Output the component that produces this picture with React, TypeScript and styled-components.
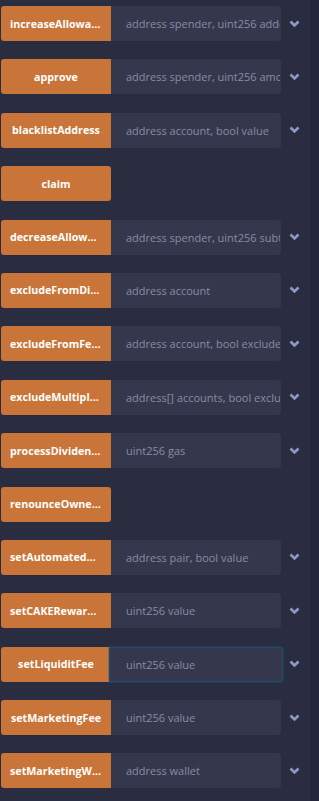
import React from "react";
import styled, { createGlobalStyle } from "styled-components";

const GlobalStyle = createGlobalStyle`
  html, body {
    margin: 0;
    padding: 0;
    background: #2a2c3f;
  }
  body {
    font-family: "Open Sans", "Liberation Sans", sans-serif;
  }
`;

const Page = styled.div`
  display: flex;
  width: 319px;
  height: 801px;
  overflow: hidden;
`;

const List = styled.div`
  flex: 1;
  display: flex;
  flex-direction: column;
  gap: 18.4px;
  padding: 6px 0 0 1px;
`;

const Strip = styled.div`
  width: 9px;
  background: #24263a;
`;

const Row = styled.div`
  display: flex;
  align-items: center;
  height: 35px;
`;

const FnButton = styled.button<{ $single?: boolean }>`
  width: 110px;
  height: 35px;
  flex: none;
  border: none;
  border-radius: ${(p) => (p.$single ? "3px" : "3px 0 0 3px")};
  background: #c97539;
  color: #fff;
  font-family: inherit;
  font-weight: 700;
  font-size: 10.7px;
  padding: 0 9px;
  white-space: nowrap;
  overflow: hidden;
  text-overflow: ellipsis;
`;

const ArgInput = styled.input<{ $focus?: boolean }>`
  height: 35px;
  box-sizing: border-box;
  border: 1px solid ${(p) => (p.$focus ? "#1e4f66" : "transparent")};
  margin-left: ${(p) => (p.$focus ? "-2px" : "0")};
  width: ${(p) => (p.$focus ? "174px" : "170px")};
  border-radius: 0 3px 3px 0;
  background: #35384c;
  color: #c8cbdc;
  font-family: inherit;
  font-size: 11px;
  padding: 0 0 0 ${(p) => (p.$focus ? "16px" : "14px")};
  outline: none;
  box-shadow: ${(p) => (p.$focus ? "0 0 0 1px rgba(30, 90, 120, 0.35)" : "none")};
  &::placeholder {
    color: #868ca5;
  }
`;

const Toggle = styled.div<{ $shift?: boolean }>`
  width: 26px;
  display: flex;
  justify-content: center;
  align-items: center;
  margin-left: ${(p) => (p.$shift ? "-2px" : "0")};
`;

const Chevron = () => (
  <svg width="11" height="8" viewBox="0 0 11 8">
    <path d="M1.5 1.5 L5.5 5.5 L9.5 1.5" fill="none" stroke="#8d9ac4" strokeWidth="2.6" />
  </svg>
);

const fns: { name: string; args?: string; focus?: boolean }[] = [
  { name: "increaseAllowance", args: "address spender, uint256 addedValue" },
  { name: "approve", args: "address spender, uint256 amount" },
  { name: "blacklistAddress", args: "address account, bool value" },
  { name: "claim" },
  { name: "decreaseAllowance", args: "address spender, uint256 subtractedValue" },
  { name: "excludeFromDividends", args: "address account" },
  { name: "excludeFromFees", args: "address account, bool excluded" },
  { name: "excludeMultipleAccountsFromFees", args: "address[] accounts, bool excluded" },
  { name: "processDividendTracker", args: "uint256 gas" },
  { name: "renounceOwnership" },
  { name: "setAutomatedMarketMakerPair", args: "address pair, bool value" },
  { name: "setCAKERewardsFee", args: "uint256 value" },
  { name: "setLiquiditFee", args: "uint256 value", focus: true },
  { name: "setMarketingFee", args: "uint256 value" },
  { name: "setMarketingWallet", args: "address wallet" },
];

const App = () => {
  return (
    <>
      <GlobalStyle />
      <Page>
        <List>
          {fns.map((f) => (
            <Row key={f.name}>
              <FnButton $single={!f.args}>{f.name}</FnButton>
              {f.args && (
                <>
                  <ArgInput placeholder={f.args} $focus={f.focus} readOnly />
                  <Toggle $shift={f.focus}>
                    <Chevron />
                  </Toggle>
                </>
              )}
            </Row>
          ))}
        </List>
        <Strip />
      </Page>
    </>
  );
};

export default App;
